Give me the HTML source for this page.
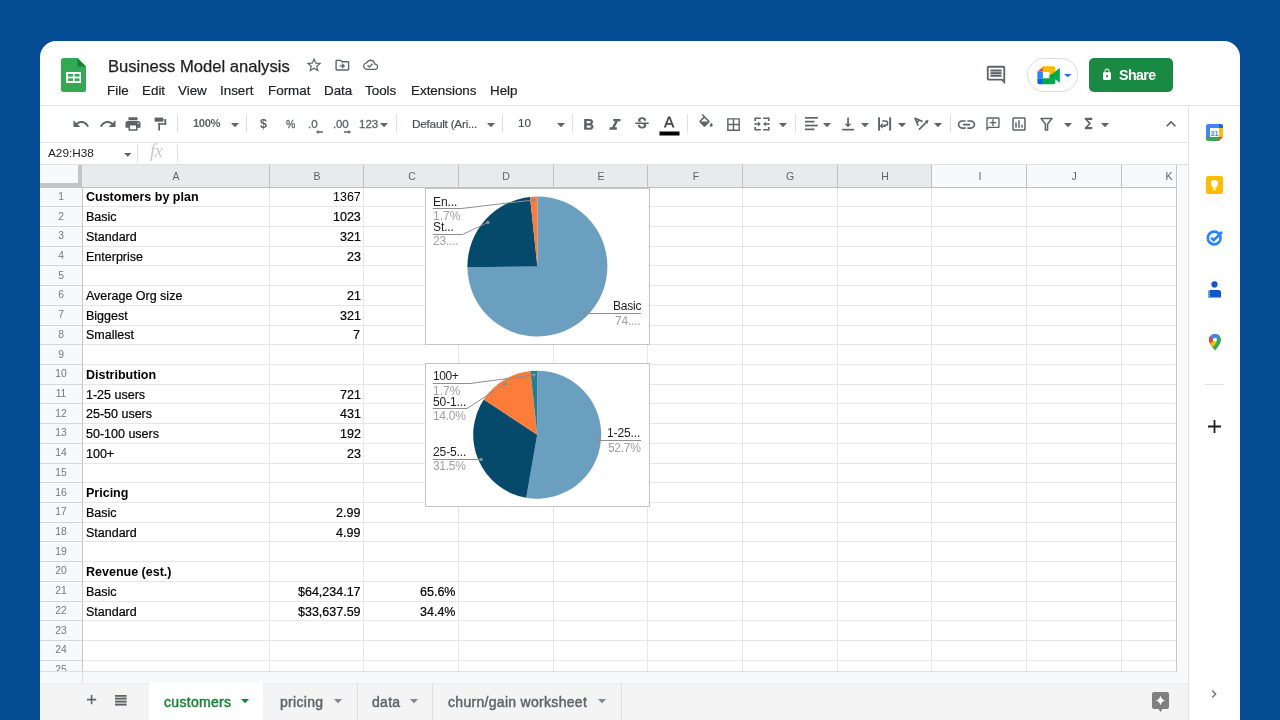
<!DOCTYPE html><html><head><meta charset="utf-8"><style>
*{box-sizing:border-box}
html,body{margin:0;padding:0}
body{-webkit-font-smoothing:antialiased;width:1280px;height:720px;overflow:hidden;position:relative;background:#044c94;font-family:"Liberation Sans", sans-serif;}
.a{position:absolute}
.t{position:absolute;white-space:nowrap;line-height:1;will-change:transform}
svg{position:absolute;overflow:visible}
</style></head><body>
<div class="a" style="left:40px;top:41px;width:1200px;height:700px;background:#fff;border-radius:16px 16px 0 0"></div>

<svg style="left:61.4px;top:58.4px" width="25" height="34" viewBox="0 0 25 34"><path d="M0 2.5 Q0 0 2.5 0 H16.5 L25 8.5 V31.5 Q25 34 22.5 34 H2.5 Q0 34 0 31.5 Z" fill="#34a853"/>
<path d="M16.5 0 L25 8.5 H16.5 Z" fill="#188038"/>
<rect x="5" y="14" width="15" height="11" fill="#fff"/>
<rect x="7" y="16" width="5" height="2.6" fill="#34a853"/><rect x="13.5" y="16" width="5" height="2.6" fill="#34a853"/>
<rect x="7" y="20.4" width="5" height="2.6" fill="#34a853"/><rect x="13.5" y="20.4" width="5" height="2.6" fill="#34a853"/></svg>
<div class="t" style="left:107.5px;top:58.55px;font-size:16.6px;color:#1f1f1f;font-weight:400;-webkit-text-stroke:0.25px #1f1f1f">Business Model analysis</div>
<svg style="left:305px;top:56px" width="18" height="18" viewBox="0 0 24 24" preserveAspectRatio="none"><path d="M22 9.24l-7.19-.62L12 2 9.19 8.63 2 9.24l5.46 4.73L5.82 21 12 17.27 18.18 21l-1.63-7.03L22 9.24zM12 15.4l-3.76 2.27 1-4.28-3.32-2.88 4.38-.38L12 6.1l1.71 4.04 4.38.38-3.32 2.88 1 4.28L12 15.4z" fill="#5f6368" /></svg>
<svg style="left:334.3px;top:56.6px" width="16.7" height="16.4" viewBox="0 0 24 24" preserveAspectRatio="none"><path d="M20 6h-8l-2-2H4c-1.1 0-1.99.9-1.99 2L2 18c0 1.1.9 2 2 2h16c1.1 0 2-.9 2-2V8c0-1.1-.9-2-2-2zm0 12H4V6h5.17l2 2H20v10zm-7.84-6H8v2h4.16l-1.59 1.59L11.99 17 16 13.01 11.99 9l-1.41 1.41L12.16 12z" fill="#5f6368" /></svg>
<svg style="left:363.3px;top:57.2px" width="15.2" height="15.6" viewBox="0 0 24 24" preserveAspectRatio="none"><path d="M19.35 10.04C18.67 6.59 15.64 4 12 4 9.11 4 6.6 5.64 5.35 8.04 2.34 8.36 0 10.91 0 14c0 3.31 2.69 6 6 6h13c2.76 0 5-2.24 5-5 0-2.64-2.05-4.78-4.65-4.96zM19 18H6c-2.21 0-4-1.79-4-4 0-2.05 1.530-3.76 3.56-3.97l1.07-.11.5-.95C8.08 7.14 9.94 6 12 6c2.62 0 4.88 1.86 5.39 4.43l.3 1.5 1.530.11c1.56.1 2.78 1.41 2.78 2.96 0 1.65-1.35 3-3 3zm-9-3.82l-2.09-2.09L6.5 13.5 10 17l6.01-6.01-1.41-1.41z" fill="#5f6368" /></svg>
<div class="t" style="left:107px;top:83.96px;font-size:13.4px;color:#202124;font-weight:400;-webkit-text-stroke:0.2px #202124">File</div>
<div class="t" style="left:141.5px;top:83.96px;font-size:13.4px;color:#202124;font-weight:400;-webkit-text-stroke:0.2px #202124">Edit</div>
<div class="t" style="left:177.5px;top:83.96px;font-size:13.4px;color:#202124;font-weight:400;-webkit-text-stroke:0.2px #202124">View</div>
<div class="t" style="left:220px;top:83.96px;font-size:13.4px;color:#202124;font-weight:400;-webkit-text-stroke:0.2px #202124">Insert</div>
<div class="t" style="left:267.5px;top:83.96px;font-size:13.4px;color:#202124;font-weight:400;-webkit-text-stroke:0.2px #202124">Format</div>
<div class="t" style="left:324px;top:83.96px;font-size:13.4px;color:#202124;font-weight:400;-webkit-text-stroke:0.2px #202124">Data</div>
<div class="t" style="left:365px;top:83.96px;font-size:13.4px;color:#202124;font-weight:400;-webkit-text-stroke:0.2px #202124">Tools</div>
<div class="t" style="left:411px;top:83.96px;font-size:13.4px;color:#202124;font-weight:400;-webkit-text-stroke:0.2px #202124">Extensions</div>
<div class="t" style="left:490px;top:83.96px;font-size:13.4px;color:#202124;font-weight:400;-webkit-text-stroke:0.2px #202124">Help</div>
<svg style="left:985px;top:64px" width="22" height="22" viewBox="0 0 24 24"><rect x="6" y="6.5" width="12" height="7" fill="#c0c0c0"/><path d="M21.99 4c0-1.1-.89-2-1.990-2H4c-1.1 0-2 .9-2 2v12c0 1.1.9 2 2 2h14l4 4-.01-18zM20 4v13.170L18.83 16H4V4h16zM6 12h12v2H6zm0-3h12v2H6zm0-3h12v2H6z" fill="#5f6368"/></svg>
<div class="a" style="left:1027px;top:58px;width:51px;height:34px;background:#fff;border:1px solid #dadce0;border-radius:17px"></div>
<svg style="left:1037px;top:66px" width="24" height="19" viewBox="0 0 24 19"><path d="M0.7 5.3 L5.9 0.9 V5.3 Z" fill="#ea4335"/>
<path d="M5.9 0.3 H16.4 Q18.4 0.3 18.4 2.3 V6.6 L12.4 9.6 V6.1 H5.9 Z" fill="#ffba00"/>
<path d="M0.4 5.3 H5.9 V12.5 H0.4 Z" fill="#2684fc"/>
<path d="M0.4 12.5 H5.9 V18.2 H2.4 Q0.4 18.2 0.4 16.2 Z" fill="#0066da"/>
<path d="M5.9 12.2 H12.4 V9.6 L18.4 6.6 V16.2 Q18.4 18.2 16.4 18.2 H5.9 Z" fill="#00ac47"/>
<path d="M12.4 9.6 L18.4 6.6 V13 Z" fill="#00832d"/>
<path d="M13.2 9.5 L22.8 1.9 V16.8 Z" fill="#00ac47"/></svg>
<svg style="left:1064px;top:73.5px" width="8" height="4" viewBox="0 0 8 4"><path d="M0 0 H7.5 L3.75 3.2 Z" fill="#1a73e8"/></svg>
<div class="a" style="left:1089px;top:58px;width:84px;height:34px;background:#1a8944;border-radius:5px"></div>
<svg style="left:1101px;top:68px" width="12" height="13" viewBox="0 0 24 24" preserveAspectRatio="none"><path d="M18 8h-1V6c0-2.76-2.24-5-5-5S7 3.24 7 6v2H6c-1.1 0-2 .9-2 2v10c0 1.1.9 2 2 2h12c1.1 0 2-.9 2-2V10c0-1.1-.9-2-2-2zm-6 9c-1.1 0-2-.9-2-2s.9-2 2-2 2 .9 2 2-.9 2-2 2zm3.1-9H8.9V6c0-1.71 1.39-3.1 3.1-3.1 1.71 0 3.1 1.39 3.1 3.1v2z" fill="#fff" /></svg>
<div class="t" style="left:1119.3px;top:67.98px;font-size:14.2px;color:#fff;font-weight:700;letter-spacing:-0.55px">Share</div>
<div class="a" style="left:40px;top:105px;width:1200px;height:1px;background:#e3e3e3;"></div>
<div class="a" style="left:40px;top:142px;width:1148px;height:1px;background:#e3e3e3;"></div>
<div class="a" style="left:40px;top:164px;width:1148px;height:1px;background:#e0e0e0;"></div>
<div class="a" style="left:1188px;top:106px;width:1px;height:614px;background:#e3e3e3;"></div>
<svg style="left:72px;top:115px" width="18" height="18" viewBox="0 0 24 24" preserveAspectRatio="none"><path d="M12.5 8c-2.65 0-5.05.99-6.9 2.6L2 7v9h9l-3.62-3.62c1.39-1.16 3.16-1.88 5.12-1.88 3.54 0 6.55 2.31 7.600 5.5l2.37-.78C21.08 11.03 17.15 8 12.5 8z" fill="#5f6368" /></svg>
<svg style="left:98.5px;top:115px" width="18" height="18" viewBox="0 0 24 24" preserveAspectRatio="none"><path d="M18.4 10.6C16.55 8.99 14.15 8 11.5 8c-4.65 0-8.58 3.030-9.96 7.22L3.9 16c1.05-3.19 4.05-5.5 7.6-5.5 1.95 0 3.73.72 5.12 1.88L13 16h9V7l-3.6 3.6z" fill="#5f6368" /></svg>
<svg style="left:124.4px;top:115px" width="18" height="18" viewBox="0 0 24 24" preserveAspectRatio="none"><path d="M19 8H5c-1.66 0-3 1.34-3 3v6h4v4h12v-4h4v-6c0-1.66-1.34-3-3-3zm-3 11H8v-5h8v5zm3-7c-.55 0-1-.45-1-1s.45-1 1-1 1 .45 1 1-.45 1-1 1zm-1-9H6v4h12V3z" fill="#5f6368" /></svg>
<svg style="left:150px;top:112px" width="20" height="22" viewBox="0 0 20 22"><g fill="#5f6368"><rect x="4.6" y="5.6" width="8.4" height="4.1"/><rect x="14.4" y="7.4" width="1.8" height="5.3"/><rect x="8.3" y="11.1" width="7.9" height="1.6"/><rect x="8.3" y="11.1" width="1.7" height="7.4"/><rect x="13" y="7.4" width="3.2" height="1"/></g></svg>
<div class="a" style="left:177px;top:114px;width:1px;height:19px;background:#e0e0e0;"></div>
<div class="t" style="left:192.8px;top:118.02px;font-size:11.2px;color:#5f6368;font-weight:700;letter-spacing:-0.4px">100%</div>
<svg style="left:231.2px;top:122.5px" width="8" height="5" viewBox="0 0 8 5"><path d="M0 0 H8 L4 4.2 Z" fill="#5f6368"/></svg>
<div class="a" style="left:246px;top:114px;width:1px;height:19px;background:#e0e0e0;"></div>
<div class="t" style="left:260.3px;top:117.82px;font-size:12.5px;color:#5f6368;font-weight:700;">$</div>
<div class="t" style="left:286px;top:119.11px;font-size:10.5px;color:#5f6368;font-weight:400;-webkit-text-stroke:0.3px #5f6368">%</div>
<div class="t" style="left:308.3px;top:118.77px;font-size:11.5px;color:#5f6368;font-weight:400;-webkit-text-stroke:0.3px #5f6368">.0</div>
<svg style="left:316px;top:129.5px" width="7" height="4" viewBox="0 0 7 4"><path d="M0 2 L2.5 0 V1.3 H7 V2.7 H2.5 V4 Z" fill="#5f6368"/></svg>
<div class="t" style="left:333.3px;top:118.77px;font-size:11.5px;color:#5f6368;font-weight:400;letter-spacing:-0.2px;-webkit-text-stroke:0.3px #5f6368">.00</div>
<svg style="left:344.3px;top:129.5px" width="7" height="4" viewBox="0 0 7 4"><path d="M7 2 L4.5 0 V1.3 H0 V2.7 H4.5 V4 Z" fill="#5f6368"/></svg>
<div class="t" style="left:358.8px;top:118.77px;font-size:11.5px;color:#5f6368;font-weight:400;-webkit-text-stroke:0.3px #5f6368">123</div>
<svg style="left:379.7px;top:122.5px" width="8" height="5" viewBox="0 0 8 5"><path d="M0 0 H8 L4 4.2 Z" fill="#5f6368"/></svg>
<div class="a" style="left:396px;top:114px;width:1px;height:19px;background:#e0e0e0;"></div>
<div class="t" style="left:411.7px;top:118.51px;font-size:11.8px;color:#4d5156;font-weight:400;letter-spacing:-0.25px;-webkit-text-stroke:0.2px #4d5156">Default (Ari...</div>
<svg style="left:486.7px;top:122.5px" width="8" height="5" viewBox="0 0 8 5"><path d="M0 0 H8 L4 4.2 Z" fill="#5f6368"/></svg>
<div class="a" style="left:502px;top:114px;width:1px;height:19px;background:#e0e0e0;"></div>
<div class="t" style="left:518px;top:118.21px;font-size:11.8px;color:#4d5156;font-weight:400;-webkit-text-stroke:0.2px #4d5156">10</div>
<svg style="left:557.0px;top:122.5px" width="8" height="5" viewBox="0 0 8 5"><path d="M0 0 H8 L4 4.2 Z" fill="#5f6368"/></svg>
<div class="a" style="left:572px;top:114px;width:1px;height:19px;background:#e0e0e0;"></div>
<svg style="left:577.9px;top:115.8px" width="21" height="18.2" viewBox="0 0 24 24" preserveAspectRatio="none"><path d="M15.6 10.79c.97-.67 1.65-1.77 1.65-2.79 0-2.26-1.75-4-4-4H7v14h7.04c2.09 0 3.71-1.7 3.71-3.79 0-1.52-.86-2.82-2.15-3.42zM10 6.5h3c.83 0 1.5.67 1.5 1.5s-.67 1.5-1.5 1.5h-3v-3zm3.5 9H10v-3h3.5c.83 0 1.5.67 1.5 1.5s-.67 1.5-1.5 1.5z" fill="#5f6368" /></svg>
<svg style="left:604.3px;top:115.8px" width="22" height="18.2" viewBox="0 0 24 24" preserveAspectRatio="none"><path d="M10 4v3h2.21l-3.42 8H6v3h8v-3h-2.21l3.42-8H18V4z" fill="#5f6368" /></svg>
<svg style="left:633px;top:115px" width="18" height="18" viewBox="0 0 24 24" preserveAspectRatio="none"><path d="M7.24 8.75c-.26-.48-.39-1.03-.39-1.67 0-.61.13-1.16.4-1.67.26-.5.63-.93 1.11-1.29.48-.35 1.05-.63 1.7-.83.66-.19 1.39-.29 2.18-.29.81 0 1.54.11 2.21.34.66.22 1.23.54 1.69.94.47.4.83.88 1.08 1.43.25.55.38 1.15.38 1.81h-3.01c0-.31-.05-.59-.15-.85-.09-.27-.24-.49-.44-.68-.2-.19-.45-.33-.75-.44-.3-.1-.66-.16-1.06-.16-.39 0-.74.04-1.03.13-.29.09-.53.21-.72.36-.19.16-.34.34-.44.55-.1.21-.15.43-.15.66 0 .48.25.88.74 1.21.38.25.77.48 1.41.7H7.39c-.05-.08-.11-.17-.15-.25zM21 12v-2H3v2h9.62c.18.07.4.14.55.2.37.17.66.34.87.51.21.17.35.36.43.57.07.2.11.43.11.69 0 .23-.05.45-.14.66-.09.2-.23.38-.42.53-.19.15-.42.26-.71.35-.29.08-.63.13-1.01.13-.43 0-.83-.04-1.18-.13s-.66-.23-.91-.42c-.25-.19-.45-.44-.59-.75-.14-.31-.25-.76-.25-1.21H6.4c0 .55.08 1.13.24 1.58.16.45.37.85.65 1.21.28.35.6.66.98.92.37.26.78.48 1.22.65.44.17.9.3 1.38.39.48.08.96.13 1.44.13.8 0 1.53-.09 2.18-.28s1.21-.45 1.67-.79c.46-.34.82-.77 1.07-1.27s.38-1.07.38-1.71c0-.6-.1-1.14-.31-1.61-.05-.11-.11-.23-.17-.33H21z" fill="#5f6368" /></svg>
<svg style="left:659px;top:116px" width="21" height="20" viewBox="0 0 21 20"><path d="M4.8 11.5 L9.1 0.6 H11.2 L15.5 11.5 H13.4 L12.4 8.8 H7.9 L6.9 11.5 Z M8.5 7.1 H11.8 L10.15 2.6 Z" fill="#444746"/><rect x="0.5" y="15.5" width="20" height="4" fill="#000"/></svg>
<div class="a" style="left:687px;top:114px;width:1px;height:19px;background:#e0e0e0;"></div>
<svg style="left:697px;top:114px" width="18" height="18" viewBox="0 0 24 24" preserveAspectRatio="none"><path d="M16.56 8.94L7.62 0 6.21 1.41l2.38 2.38-5.15 5.15c-.59.59-.59 1.54 0 2.12l5.5 5.5c.29.29.68.44 1.06.44s.77-.15 1.06-.44l5.5-5.5c.59-.58.59-1.53 0-2.12zM5.21 10L10 5.21 14.79 10H5.21zM19 11.5s-2 2.17-2 3.5c0 1.1.9 2 2 2s2-.9 2-2c0-1.33-2-3.5-2-3.5z" fill="#5f6368" /></svg>
<svg style="left:725px;top:115.5px" width="17" height="17" viewBox="0 0 24 24" preserveAspectRatio="none"><path d="M3 3v18h18V3H3zm8 16H5v-6h6v6zm0-8H5V5h6v6zm8 8h-6v-6h6v6zm0-8h-6V5h6v6z" fill="#5f6368" /></svg>
<svg style="left:750px;top:112px" width="24" height="24" viewBox="0 0 24 24"><g fill="none" stroke="#5f6368" stroke-width="1.6"><path d="M5.2 9 V6.2 H10.8"/><path d="M5.2 15 V17.8 H10.8"/><path d="M18.8 9 V6.2 H13.2"/><path d="M18.8 15 V17.8 H13.2"/><path d="M4.4 12 H9"/><path d="M19.6 12 H15"/></g><path d="M8.2 9.6 L10.8 12 L8.2 14.4Z M15.8 9.6 L13.2 12 L15.8 14.4Z" fill="#5f6368"/></svg>
<svg style="left:779.0px;top:122.5px" width="8" height="5" viewBox="0 0 8 5"><path d="M0 0 H8 L4 4.2 Z" fill="#5f6368"/></svg>
<div class="a" style="left:795px;top:114px;width:1px;height:19px;background:#e0e0e0;"></div>
<svg style="left:805px;top:117.4px" width="13" height="13" viewBox="0 0 13 13"><g fill="#5f6368"><rect x="0" y="0" width="12.8" height="1.7"/><rect x="0" y="3.8" width="9.4" height="1.7"/><rect x="0" y="7.7" width="12.8" height="1.7"/><rect x="0" y="11.5" width="9.4" height="1.7"/></g></svg>
<svg style="left:823.4px;top:122.5px" width="8" height="5" viewBox="0 0 8 5"><path d="M0 0 H8 L4 4.2 Z" fill="#5f6368"/></svg>
<svg style="left:842px;top:117px" width="13" height="14" viewBox="0 0 13 14"><g fill="#5f6368"><rect x="5.2" y="0.6" width="1.7" height="7.5"/><path d="M2.6 6.8 H9.4 L6 10.3 Z"/><rect x="0.2" y="11.8" width="11.8" height="1.7"/></g></svg>
<svg style="left:860.6px;top:122.5px" width="8" height="5" viewBox="0 0 8 5"><path d="M0 0 H8 L4 4.2 Z" fill="#5f6368"/></svg>
<svg style="left:877px;top:116px" width="16" height="16" viewBox="0 0 16 16"><g fill="#5f6368"><rect x="1.1" y="1.3" width="1.9" height="13.3"/><rect x="12.2" y="1.3" width="1.9" height="13.3"/><path d="M8.5 9.4 L5 9.4 L6.3 8 L5.3 7.2 L2.6 10 L5.3 12.6 L6.3 11.7 L5 10.9 H8.5Z"/></g><path d="M5.2 5 H8.6 Q10.6 5 10.6 7.2 Q10.6 9.3 8.6 9.3 H6.5" fill="none" stroke="#5f6368" stroke-width="1.6"/></svg>
<svg style="left:897.7px;top:122.5px" width="8" height="5" viewBox="0 0 8 5"><path d="M0 0 H8 L4 4.2 Z" fill="#5f6368"/></svg>
<svg style="left:912px;top:116px" width="18" height="16" viewBox="0 0 18 16"><g fill="none" stroke="#5f6368" stroke-width="1.6" stroke-linejoin="round"><path d="M6.2 9.8 L3 2.2 L10.6 5.6"/><path d="M4.6 6.6 L7.2 4.2"/><path d="M7 13.6 L15.2 5.4"/></g><path d="M16.6 3.8 L12.6 4.9 L15.5 7.8 Z" fill="#5f6368"/></svg>
<svg style="left:933.6px;top:122.5px" width="8" height="5" viewBox="0 0 8 5"><path d="M0 0 H8 L4 4.2 Z" fill="#5f6368"/></svg>
<div class="a" style="left:950px;top:114px;width:1px;height:19px;background:#e0e0e0;"></div>
<svg style="left:956px;top:114px" width="21" height="21" viewBox="0 0 24 24" preserveAspectRatio="none"><path d="M3.9 12c0-1.71 1.39-3.1 3.1-3.1h4V7H7c-2.76 0-5 2.24-5 5s2.24 5 5 5h4v-1.9H7c-1.71 0-3.1-1.390-3.1-3.1zM8 13h8v-2H8v2zm9-6h-4v1.9h4c1.71 0 3.1 1.39 3.1 3.1s-1.39 3.1-3.1 3.1h-4V17h4c2.76 0 5-2.24 5-5s-2.24-5-5-5z" fill="#5f6368" /></svg>
<svg style="left:985px;top:116px" width="16" height="16" viewBox="0 0 24 24" preserveAspectRatio="none"><path d="M20 2H4c-1.1 0-2 .9-2 2v18l4-4h14c1.1 0 2-.9 2-2V4c0-1.1-.9-2-2-2zm0 14H5.17L4 17.17V4h16v12zM13 5h-2v4H7v2h4v4h2v-4h4V9h-4z" fill="#5f6368" /></svg>
<svg style="left:1010px;top:115px" width="18" height="18" viewBox="0 0 24 24" preserveAspectRatio="none"><path d="M19 3H5c-1.1 0-2 .9-2 2v14c0 1.1.9 2 2 2h14c1.1 0 2-.9 2-2V5c0-1.1-.9-2-2-2zm0 16H5V5h14v14zM7 10h2v7H7zm4-3h2v10h-2zm4 6h2v4h-2z" fill="#5f6368" /></svg>
<svg style="left:1040px;top:117px" width="13" height="14" viewBox="0 0 13 14"><path d="M1 1.5 H12 L7.6 7 V13 H5.4 V7 Z" fill="none" stroke="#5f6368" stroke-width="1.5" stroke-linejoin="round"/></svg>
<svg style="left:1064.0px;top:122.5px" width="8" height="5" viewBox="0 0 8 5"><path d="M0 0 H8 L4 4.2 Z" fill="#5f6368"/></svg>
<svg style="left:1081px;top:115px" width="15" height="17" viewBox="0 0 24 24" preserveAspectRatio="none"><path d="M18 4H6v2l6.5 6L6 18v2h12v-3h-7l5-5-5-5h7z" fill="#5f6368" /></svg>
<svg style="left:1100.5px;top:122.5px" width="8" height="5" viewBox="0 0 8 5"><path d="M0 0 H8 L4 4.2 Z" fill="#5f6368"/></svg>
<svg style="left:1161px;top:114px" width="20" height="20" viewBox="0 0 24 24" preserveAspectRatio="none"><path d="M12 8l-6 6 1.41 1.41L12 10.83l4.59 4.58L18 14z" fill="#5f6368" /></svg>
<div class="t" style="left:47.5px;top:147.51px;font-size:11.8px;color:#1f1f1f;font-weight:400;">A29:H38</div>
<svg style="left:123.5px;top:152.8px" width="8" height="5" viewBox="0 0 8 5"><path d="M0 0 H7.5 L3.75 3.8 Z" fill="#5f6368"/></svg>
<div class="a" style="left:137px;top:144px;width:1px;height:19px;background:#e0e0e0;"></div>
<div class="t" style="left:149.5px;top:142.14px;font-size:18.5px;color:#cacaca;font-weight:400;font-family:'Liberation Serif',serif;font-style:italic;letter-spacing:-0.5px">fx</div>
<div class="a" style="left:177px;top:145px;width:1px;height:17px;background:#e0e0e0;"></div>
<div class="a" style="left:40px;top:165px;width:1148px;height:22px;background:#ffffff;"></div>
<div class="a" style="left:40px;top:165px;width:42px;height:22px;background:#f8f9fa;"></div>
<div class="a" style="left:82px;top:165px;width:850px;height:22px;background:#e8eaed;"></div>
<div class="a" style="left:932px;top:165px;width:245px;height:22px;background:#f8f9fa;"></div>
<div class="a" style="left:40px;top:187px;width:42px;height:485px;background:#f8f9fa;"></div>
<div class="t" style="left:76.25px;width:200px;text-align:center;top:171.31px;font-size:10.5px;color:#5f6368;font-weight:400;">A</div>
<div class="t" style="left:216.85000000000002px;width:200px;text-align:center;top:171.31px;font-size:10.5px;color:#5f6368;font-weight:400;">B</div>
<div class="t" style="left:311.54999999999995px;width:200px;text-align:center;top:171.31px;font-size:10.5px;color:#5f6368;font-weight:400;">C</div>
<div class="t" style="left:406.25px;width:200px;text-align:center;top:171.31px;font-size:10.5px;color:#5f6368;font-weight:400;">D</div>
<div class="t" style="left:500.95000000000005px;width:200px;text-align:center;top:171.31px;font-size:10.5px;color:#5f6368;font-weight:400;">E</div>
<div class="t" style="left:595.65px;width:200px;text-align:center;top:171.31px;font-size:10.5px;color:#5f6368;font-weight:400;">F</div>
<div class="t" style="left:690.35px;width:200px;text-align:center;top:171.31px;font-size:10.5px;color:#5f6368;font-weight:400;">G</div>
<div class="t" style="left:785.05px;width:200px;text-align:center;top:171.31px;font-size:10.5px;color:#5f6368;font-weight:400;">H</div>
<div class="t" style="left:879.75px;width:200px;text-align:center;top:171.31px;font-size:10.5px;color:#5f6368;font-weight:400;">I</div>
<div class="t" style="left:974.45px;width:200px;text-align:center;top:171.31px;font-size:10.5px;color:#5f6368;font-weight:400;">J</div>
<div class="t" style="left:1069.15px;width:200px;text-align:center;top:171.31px;font-size:10.5px;color:#5f6368;font-weight:400;">K</div>
<div class="a" style="left:40px;top:206px;width:42px;height:1px;background:#d6d6d6;"></div>
<div class="a" style="left:82px;top:206px;width:1095px;height:1px;background:#e6e6e6;"></div>
<div class="a" style="left:40px;top:226px;width:42px;height:1px;background:#d6d6d6;"></div>
<div class="a" style="left:82px;top:226px;width:1095px;height:1px;background:#e6e6e6;"></div>
<div class="a" style="left:40px;top:246px;width:42px;height:1px;background:#d6d6d6;"></div>
<div class="a" style="left:82px;top:246px;width:1095px;height:1px;background:#e6e6e6;"></div>
<div class="a" style="left:40px;top:265px;width:42px;height:1px;background:#d6d6d6;"></div>
<div class="a" style="left:82px;top:265px;width:1095px;height:1px;background:#e6e6e6;"></div>
<div class="a" style="left:40px;top:285px;width:42px;height:1px;background:#d6d6d6;"></div>
<div class="a" style="left:82px;top:285px;width:1095px;height:1px;background:#e6e6e6;"></div>
<div class="a" style="left:40px;top:305px;width:42px;height:1px;background:#d6d6d6;"></div>
<div class="a" style="left:82px;top:305px;width:1095px;height:1px;background:#e6e6e6;"></div>
<div class="a" style="left:40px;top:325px;width:42px;height:1px;background:#d6d6d6;"></div>
<div class="a" style="left:82px;top:325px;width:1095px;height:1px;background:#e6e6e6;"></div>
<div class="a" style="left:40px;top:344px;width:42px;height:1px;background:#d6d6d6;"></div>
<div class="a" style="left:82px;top:344px;width:1095px;height:1px;background:#e6e6e6;"></div>
<div class="a" style="left:40px;top:364px;width:42px;height:1px;background:#d6d6d6;"></div>
<div class="a" style="left:82px;top:364px;width:1095px;height:1px;background:#e6e6e6;"></div>
<div class="a" style="left:40px;top:384px;width:42px;height:1px;background:#d6d6d6;"></div>
<div class="a" style="left:82px;top:384px;width:1095px;height:1px;background:#e6e6e6;"></div>
<div class="a" style="left:40px;top:403px;width:42px;height:1px;background:#d6d6d6;"></div>
<div class="a" style="left:82px;top:403px;width:1095px;height:1px;background:#e6e6e6;"></div>
<div class="a" style="left:40px;top:423px;width:42px;height:1px;background:#d6d6d6;"></div>
<div class="a" style="left:82px;top:423px;width:1095px;height:1px;background:#e6e6e6;"></div>
<div class="a" style="left:40px;top:443px;width:42px;height:1px;background:#d6d6d6;"></div>
<div class="a" style="left:82px;top:443px;width:1095px;height:1px;background:#e6e6e6;"></div>
<div class="a" style="left:40px;top:463px;width:42px;height:1px;background:#d6d6d6;"></div>
<div class="a" style="left:82px;top:463px;width:1095px;height:1px;background:#e6e6e6;"></div>
<div class="a" style="left:40px;top:482px;width:42px;height:1px;background:#d6d6d6;"></div>
<div class="a" style="left:82px;top:482px;width:1095px;height:1px;background:#e6e6e6;"></div>
<div class="a" style="left:40px;top:502px;width:42px;height:1px;background:#d6d6d6;"></div>
<div class="a" style="left:82px;top:502px;width:1095px;height:1px;background:#e6e6e6;"></div>
<div class="a" style="left:40px;top:522px;width:42px;height:1px;background:#d6d6d6;"></div>
<div class="a" style="left:82px;top:522px;width:1095px;height:1px;background:#e6e6e6;"></div>
<div class="a" style="left:40px;top:541px;width:42px;height:1px;background:#d6d6d6;"></div>
<div class="a" style="left:82px;top:541px;width:1095px;height:1px;background:#e6e6e6;"></div>
<div class="a" style="left:40px;top:561px;width:42px;height:1px;background:#d6d6d6;"></div>
<div class="a" style="left:82px;top:561px;width:1095px;height:1px;background:#e6e6e6;"></div>
<div class="a" style="left:40px;top:581px;width:42px;height:1px;background:#d6d6d6;"></div>
<div class="a" style="left:82px;top:581px;width:1095px;height:1px;background:#e6e6e6;"></div>
<div class="a" style="left:40px;top:601px;width:42px;height:1px;background:#d6d6d6;"></div>
<div class="a" style="left:82px;top:601px;width:1095px;height:1px;background:#e6e6e6;"></div>
<div class="a" style="left:40px;top:620px;width:42px;height:1px;background:#d6d6d6;"></div>
<div class="a" style="left:82px;top:620px;width:1095px;height:1px;background:#e6e6e6;"></div>
<div class="a" style="left:40px;top:640px;width:42px;height:1px;background:#d6d6d6;"></div>
<div class="a" style="left:82px;top:640px;width:1095px;height:1px;background:#e6e6e6;"></div>
<div class="a" style="left:40px;top:660px;width:42px;height:1px;background:#d6d6d6;"></div>
<div class="a" style="left:82px;top:660px;width:1095px;height:1px;background:#e6e6e6;"></div>
<div class="a" style="left:269px;top:187px;width:1px;height:485px;background:#e6e6e6;"></div>
<div class="a" style="left:269px;top:165px;width:1px;height:22px;background:#c0c0c0;"></div>
<div class="a" style="left:363px;top:187px;width:1px;height:485px;background:#e6e6e6;"></div>
<div class="a" style="left:363px;top:165px;width:1px;height:22px;background:#c0c0c0;"></div>
<div class="a" style="left:458px;top:187px;width:1px;height:485px;background:#e6e6e6;"></div>
<div class="a" style="left:458px;top:165px;width:1px;height:22px;background:#c0c0c0;"></div>
<div class="a" style="left:553px;top:187px;width:1px;height:485px;background:#e6e6e6;"></div>
<div class="a" style="left:553px;top:165px;width:1px;height:22px;background:#c0c0c0;"></div>
<div class="a" style="left:647px;top:187px;width:1px;height:485px;background:#e6e6e6;"></div>
<div class="a" style="left:647px;top:165px;width:1px;height:22px;background:#c0c0c0;"></div>
<div class="a" style="left:742px;top:187px;width:1px;height:485px;background:#e6e6e6;"></div>
<div class="a" style="left:742px;top:165px;width:1px;height:22px;background:#c0c0c0;"></div>
<div class="a" style="left:837px;top:187px;width:1px;height:485px;background:#e6e6e6;"></div>
<div class="a" style="left:837px;top:165px;width:1px;height:22px;background:#c0c0c0;"></div>
<div class="a" style="left:931px;top:187px;width:1px;height:485px;background:#e6e6e6;"></div>
<div class="a" style="left:931px;top:165px;width:1px;height:22px;background:#c0c0c0;"></div>
<div class="a" style="left:1026px;top:187px;width:1px;height:485px;background:#e6e6e6;"></div>
<div class="a" style="left:1026px;top:165px;width:1px;height:22px;background:#c0c0c0;"></div>
<div class="a" style="left:1121px;top:187px;width:1px;height:485px;background:#e6e6e6;"></div>
<div class="a" style="left:1121px;top:165px;width:1px;height:22px;background:#c0c0c0;"></div>
<div class="a" style="left:1176px;top:165px;width:1px;height:518px;background:#c7c7c7;"></div>
<div class="a" style="left:40px;top:187px;width:1137px;height:1px;background:#c0c0c0;"></div>
<div class="a" style="left:78px;top:165px;width:4px;height:22px;background:#c4c4c4;"></div>
<div class="a" style="left:82px;top:187px;width:1px;height:485px;background:#c7c7c7;"></div>
<div class="a" style="left:40px;top:183px;width:42px;height:4px;background:#c4c4c4;"></div>
<div class="t" style="left:-39px;width:200px;text-align:center;top:191.82px;font-size:10.3px;color:#777777;font-weight:400;">1</div>
<div class="t" style="left:-39px;width:200px;text-align:center;top:211.54px;font-size:10.3px;color:#777777;font-weight:400;">2</div>
<div class="t" style="left:-39px;width:200px;text-align:center;top:231.25px;font-size:10.3px;color:#777777;font-weight:400;">3</div>
<div class="t" style="left:-39px;width:200px;text-align:center;top:250.97px;font-size:10.3px;color:#777777;font-weight:400;">4</div>
<div class="t" style="left:-39px;width:200px;text-align:center;top:270.69px;font-size:10.3px;color:#777777;font-weight:400;">5</div>
<div class="t" style="left:-39px;width:200px;text-align:center;top:290.40px;font-size:10.3px;color:#777777;font-weight:400;">6</div>
<div class="t" style="left:-39px;width:200px;text-align:center;top:310.12px;font-size:10.3px;color:#777777;font-weight:400;">7</div>
<div class="t" style="left:-39px;width:200px;text-align:center;top:329.84px;font-size:10.3px;color:#777777;font-weight:400;">8</div>
<div class="t" style="left:-39px;width:200px;text-align:center;top:349.56px;font-size:10.3px;color:#777777;font-weight:400;">9</div>
<div class="t" style="left:-39px;width:200px;text-align:center;top:369.27px;font-size:10.3px;color:#777777;font-weight:400;">10</div>
<div class="t" style="left:-39px;width:200px;text-align:center;top:388.99px;font-size:10.3px;color:#777777;font-weight:400;">11</div>
<div class="t" style="left:-39px;width:200px;text-align:center;top:408.71px;font-size:10.3px;color:#777777;font-weight:400;">12</div>
<div class="t" style="left:-39px;width:200px;text-align:center;top:428.42px;font-size:10.3px;color:#777777;font-weight:400;">13</div>
<div class="t" style="left:-39px;width:200px;text-align:center;top:448.14px;font-size:10.3px;color:#777777;font-weight:400;">14</div>
<div class="t" style="left:-39px;width:200px;text-align:center;top:467.86px;font-size:10.3px;color:#777777;font-weight:400;">15</div>
<div class="t" style="left:-39px;width:200px;text-align:center;top:487.57px;font-size:10.3px;color:#777777;font-weight:400;">16</div>
<div class="t" style="left:-39px;width:200px;text-align:center;top:507.29px;font-size:10.3px;color:#777777;font-weight:400;">17</div>
<div class="t" style="left:-39px;width:200px;text-align:center;top:527.01px;font-size:10.3px;color:#777777;font-weight:400;">18</div>
<div class="t" style="left:-39px;width:200px;text-align:center;top:546.73px;font-size:10.3px;color:#777777;font-weight:400;">19</div>
<div class="t" style="left:-39px;width:200px;text-align:center;top:566.44px;font-size:10.3px;color:#777777;font-weight:400;">20</div>
<div class="t" style="left:-39px;width:200px;text-align:center;top:586.16px;font-size:10.3px;color:#777777;font-weight:400;">21</div>
<div class="t" style="left:-39px;width:200px;text-align:center;top:605.88px;font-size:10.3px;color:#777777;font-weight:400;">22</div>
<div class="t" style="left:-39px;width:200px;text-align:center;top:625.59px;font-size:10.3px;color:#777777;font-weight:400;">23</div>
<div class="t" style="left:-39px;width:200px;text-align:center;top:645.31px;font-size:10.3px;color:#777777;font-weight:400;">24</div>
<div class="t" style="left:-39px;width:200px;text-align:center;top:665.03px;font-size:10.3px;color:#777777;font-weight:400;">25</div>
<div class="a" style="left:40px;top:672px;width:1148px;height:11px;background:#f8f9fa;"></div>
<div class="a" style="left:40px;top:671px;width:1137px;height:1px;background:#e0e0e0;"></div>
<div class="a" style="left:1177px;top:165px;width:11px;height:518px;background:#f8f9fa;"></div>
<div class="a" style="left:82px;top:672px;width:1px;height:11px;background:#e0e0e0;"></div>
<div class="t" style="left:86.3px;top:191.47px;font-size:12.5px;color:#000;font-weight:700;">Customers by plan</div>
<div class="t" style="right:919.6px;top:191.47px;font-size:12.5px;color:#000;font-weight:400;">1367</div>
<div class="t" style="left:86.3px;top:211.19px;font-size:12.5px;color:#000;font-weight:400;-webkit-text-stroke:0.2px #000">Basic</div>
<div class="t" style="right:919.6px;top:211.19px;font-size:12.5px;color:#000;font-weight:400;-webkit-text-stroke:0.2px #000">1023</div>
<div class="t" style="left:86.3px;top:230.90px;font-size:12.5px;color:#000;font-weight:400;-webkit-text-stroke:0.2px #000">Standard</div>
<div class="t" style="right:919.6px;top:230.90px;font-size:12.5px;color:#000;font-weight:400;-webkit-text-stroke:0.2px #000">321</div>
<div class="t" style="left:86.3px;top:250.62px;font-size:12.5px;color:#000;font-weight:400;-webkit-text-stroke:0.2px #000">Enterprise</div>
<div class="t" style="right:919.6px;top:250.62px;font-size:12.5px;color:#000;font-weight:400;-webkit-text-stroke:0.2px #000">23</div>
<div class="t" style="left:86.3px;top:290.05px;font-size:12.5px;color:#000;font-weight:400;-webkit-text-stroke:0.2px #000">Average Org size</div>
<div class="t" style="right:919.6px;top:290.05px;font-size:12.5px;color:#000;font-weight:400;-webkit-text-stroke:0.2px #000">21</div>
<div class="t" style="left:86.3px;top:309.77px;font-size:12.5px;color:#000;font-weight:400;-webkit-text-stroke:0.2px #000">Biggest</div>
<div class="t" style="right:919.6px;top:309.77px;font-size:12.5px;color:#000;font-weight:400;-webkit-text-stroke:0.2px #000">321</div>
<div class="t" style="left:86.3px;top:329.49px;font-size:12.5px;color:#000;font-weight:400;-webkit-text-stroke:0.2px #000">Smallest</div>
<div class="t" style="right:919.6px;top:329.49px;font-size:12.5px;color:#000;font-weight:400;-webkit-text-stroke:0.2px #000">7</div>
<div class="t" style="left:86.3px;top:368.92px;font-size:12.5px;color:#000;font-weight:700;">Distribution</div>
<div class="t" style="left:86.3px;top:388.64px;font-size:12.5px;color:#000;font-weight:400;-webkit-text-stroke:0.2px #000">1-25 users</div>
<div class="t" style="right:919.6px;top:388.64px;font-size:12.5px;color:#000;font-weight:400;-webkit-text-stroke:0.2px #000">721</div>
<div class="t" style="left:86.3px;top:408.36px;font-size:12.5px;color:#000;font-weight:400;-webkit-text-stroke:0.2px #000">25-50 users</div>
<div class="t" style="right:919.6px;top:408.36px;font-size:12.5px;color:#000;font-weight:400;-webkit-text-stroke:0.2px #000">431</div>
<div class="t" style="left:86.3px;top:428.07px;font-size:12.5px;color:#000;font-weight:400;-webkit-text-stroke:0.2px #000">50-100 users</div>
<div class="t" style="right:919.6px;top:428.07px;font-size:12.5px;color:#000;font-weight:400;-webkit-text-stroke:0.2px #000">192</div>
<div class="t" style="left:86.3px;top:447.79px;font-size:12.5px;color:#000;font-weight:400;-webkit-text-stroke:0.2px #000">100+</div>
<div class="t" style="right:919.6px;top:447.79px;font-size:12.5px;color:#000;font-weight:400;-webkit-text-stroke:0.2px #000">23</div>
<div class="t" style="left:86.3px;top:487.22px;font-size:12.5px;color:#000;font-weight:700;">Pricing</div>
<div class="t" style="left:86.3px;top:506.94px;font-size:12.5px;color:#000;font-weight:400;-webkit-text-stroke:0.2px #000">Basic</div>
<div class="t" style="right:919.6px;top:506.94px;font-size:12.5px;color:#000;font-weight:400;-webkit-text-stroke:0.2px #000">2.99</div>
<div class="t" style="left:86.3px;top:526.66px;font-size:12.5px;color:#000;font-weight:400;-webkit-text-stroke:0.2px #000">Standard</div>
<div class="t" style="right:919.6px;top:526.66px;font-size:12.5px;color:#000;font-weight:400;-webkit-text-stroke:0.2px #000">4.99</div>
<div class="t" style="left:86.3px;top:566.09px;font-size:12.5px;color:#000;font-weight:700;">Revenue (est.)</div>
<div class="t" style="left:86.3px;top:585.81px;font-size:12.5px;color:#000;font-weight:400;-webkit-text-stroke:0.2px #000">Basic</div>
<div class="t" style="right:919.6px;top:585.81px;font-size:12.5px;color:#000;font-weight:400;-webkit-text-stroke:0.2px #000">$64,234.17</div>
<div class="t" style="right:824.8px;top:585.81px;font-size:12.5px;color:#000;font-weight:400;-webkit-text-stroke:0.2px #000">65.6%</div>
<div class="t" style="left:86.3px;top:605.53px;font-size:12.5px;color:#000;font-weight:400;-webkit-text-stroke:0.2px #000">Standard</div>
<div class="t" style="right:919.6px;top:605.53px;font-size:12.5px;color:#000;font-weight:400;-webkit-text-stroke:0.2px #000">$33,637.59</div>
<div class="t" style="right:824.8px;top:605.53px;font-size:12.5px;color:#000;font-weight:400;-webkit-text-stroke:0.2px #000">34.4%</div>
<div class="a" style="left:425px;top:188px;width:225px;height:157px;background:#fff;border:1px solid #c4c4c4"></div>
<div class="a" style="left:425px;top:363px;width:225px;height:144px;background:#fff;border:1px solid #c4c4c4"></div>
<svg style="left:0;top:0" width="1280" height="720" viewBox="0 0 1280 720"><path d="M537.4 266.5 L537.40 196.50 A70 70 0 1 1 467.40 267.22 Z" fill="#6a9fc0"/><path d="M537.4 266.5 L467.40 267.22 A70 70 0 0 1 530.01 196.89 Z" fill="#064a6b"/><path d="M537.4 266.5 L530.01 196.89 A70 70 0 0 1 537.40 196.50 Z" fill="#fd7c39"/><polyline points="432.8,208.5 461.3,208.5 533.4,200" fill="none" stroke="#8e8e8e" stroke-width="1"/><circle cx="533.4" cy="200" r="1.8" fill="#8e8e8e"/><polyline points="432.8,234.5 462.5,234.5 487.8,222.5" fill="none" stroke="#8e8e8e" stroke-width="1"/><circle cx="487.8" cy="222.5" r="1.8" fill="#8e8e8e"/><polyline points="584.7,313.5 640.9,313.5" fill="none" stroke="#8e8e8e" stroke-width="1"/><circle cx="584.7" cy="313.5" r="1.8" fill="#8e8e8e"/><path d="M537.2 434.7 L537.20 370.70 A64 64 0 1 1 526.22 497.75 Z" fill="#6a9fc0"/><path d="M537.2 434.7 L526.22 497.75 A64 64 0 0 1 483.76 399.49 Z" fill="#064a6b"/><path d="M537.2 434.7 L483.76 399.49 A64 64 0 0 1 530.45 371.06 Z" fill="#fd7c39"/><path d="M537.2 434.7 L530.45 371.06 A64 64 0 0 1 537.20 370.70 Z" fill="#22808e"/><polyline points="432.8,383.5 470,383.5 533.8,375" fill="none" stroke="#8e8e8e" stroke-width="1"/><circle cx="533.8" cy="375" r="1.8" fill="#8e8e8e"/><polyline points="432.8,408.5 467,408.5 505.6,383.4" fill="none" stroke="#8e8e8e" stroke-width="1"/><circle cx="505.6" cy="383.4" r="1.8" fill="#8e8e8e"/><polyline points="597.8,440.5 641,440.5" fill="none" stroke="#8e8e8e" stroke-width="1"/><circle cx="597.8" cy="440.5" r="1.8" fill="#8e8e8e"/><polyline points="432.8,459.5 481.1,459.5" fill="none" stroke="#8e8e8e" stroke-width="1"/><circle cx="481.1" cy="459.5" r="1.8" fill="#8e8e8e"/></svg>
<div class="t" style="left:432.8px;top:195.84px;font-size:12px;color:#222222;font-weight:400;letter-spacing:-0.1px">En...</div>
<div class="t" style="left:432.8px;top:210.04px;font-size:12px;color:#a0a0a0;font-weight:400;">1.7%</div>
<div class="t" style="left:432.8px;top:221.14px;font-size:12px;color:#222222;font-weight:400;letter-spacing:-0.1px">St...</div>
<div class="t" style="left:432.8px;top:235.34px;font-size:12px;color:#a0a0a0;font-weight:400;letter-spacing:-0.2px">23....</div>
<div class="t" style="right:639.1px;top:300.34px;font-size:12px;color:#222222;font-weight:400;letter-spacing:-0.2px">Basic</div>
<div class="t" style="right:639.1px;top:314.64px;font-size:12px;color:#a0a0a0;font-weight:400;letter-spacing:-0.2px">74....</div>
<div class="t" style="left:432.8px;top:370.24px;font-size:12px;color:#222222;font-weight:400;letter-spacing:-0.4px">100+</div>
<div class="t" style="left:432.8px;top:384.94px;font-size:12px;color:#a0a0a0;font-weight:400;">1.7%</div>
<div class="t" style="left:432.8px;top:396.04px;font-size:12px;color:#222222;font-weight:400;letter-spacing:-0.1px">50-1...</div>
<div class="t" style="left:432.8px;top:410.44px;font-size:12px;color:#a0a0a0;font-weight:400;letter-spacing:-0.3px">14.0%</div>
<div class="t" style="right:639.4px;top:427.14px;font-size:12px;color:#222222;font-weight:400;letter-spacing:-0.1px">1-25...</div>
<div class="t" style="right:639.4px;top:442.04px;font-size:12px;color:#a0a0a0;font-weight:400;letter-spacing:-0.3px">52.7%</div>
<div class="t" style="left:432.8px;top:446.44px;font-size:12px;color:#222222;font-weight:400;letter-spacing:-0.1px">25-5...</div>
<div class="t" style="left:432.8px;top:460.44px;font-size:12px;color:#a0a0a0;font-weight:400;letter-spacing:-0.3px">31.5%</div>
<div class="a" style="left:40px;top:683px;width:1148px;height:37px;background:#f4f4f4;"></div>
<div class="a" style="left:40px;top:683px;width:1148px;height:1px;background:#ececec;"></div>
<svg style="left:87px;top:695px" width="9.2" height="9.2" viewBox="0 0 9.2 9.2"><path d="M3.8 0 H5.4 V3.8 H9.2 V5.4 H5.4 V9.2 H3.8 V5.4 H0 V3.8 H3.8 Z" fill="#5f6368"/></svg>
<svg style="left:115px;top:695px" width="11.6" height="10.6" viewBox="0 0 11.6 10.6"><rect x="0" y="1.2" width="11.6" height="8.4" fill="#bdbdbd"/><g fill="#5f6368"><rect x="0" y="0" width="11.6" height="1.7"/><rect x="0" y="3" width="11.6" height="1.3"/><rect x="0" y="6" width="11.6" height="1.3"/><rect x="0" y="9" width="11.6" height="1.6"/></g></svg>
<div class="a" style="left:149px;top:683px;width:114px;height:37px;background:#ffffff;"></div>
<div class="t" style="left:164px;top:694.75px;font-size:14px;color:#188038;font-weight:400;letter-spacing:0.3px;-webkit-text-stroke:0.45px #188038">customers</div>
<svg style="left:240.8px;top:699.0px" width="8" height="5" viewBox="0 0 8 5"><path d="M0 0 H8 L4 4.2 Z" fill="#188038"/></svg>
<div class="a" style="left:356.5px;top:683px;width:1px;height:37px;background:#dedede;"></div>
<div class="a" style="left:432px;top:683px;width:1px;height:37px;background:#dedede;"></div>
<div class="a" style="left:620.5px;top:683px;width:1px;height:37px;background:#dedede;"></div>
<div class="t" style="left:279.5px;top:694.75px;font-size:14px;color:#5f6368;font-weight:400;letter-spacing:0.3px;-webkit-text-stroke:0.45px #5f6368">pricing</div>
<svg style="left:333.5px;top:699.0px" width="8" height="5" viewBox="0 0 8 5"><path d="M0 0 H8 L4 4.2 Z" fill="#80868b"/></svg>
<div class="t" style="left:372.2px;top:694.75px;font-size:14px;color:#5f6368;font-weight:400;letter-spacing:0.3px;-webkit-text-stroke:0.45px #5f6368">data</div>
<svg style="left:409.7px;top:699.0px" width="8" height="5" viewBox="0 0 8 5"><path d="M0 0 H8 L4 4.2 Z" fill="#80868b"/></svg>
<div class="t" style="left:448px;top:694.75px;font-size:14px;color:#5f6368;font-weight:400;letter-spacing:0.3px;-webkit-text-stroke:0.45px #5f6368">churn/gain worksheet</div>
<svg style="left:598.2px;top:699.0px" width="8" height="5" viewBox="0 0 8 5"><path d="M0 0 H8 L4 4.2 Z" fill="#80868b"/></svg>
<svg style="left:1152px;top:692px" width="17" height="20" viewBox="0 0 17 20"><path d="M2 0 H15 Q17 0 17 2 V15 Q17 17 15 17 H10.5 L8.5 20 L6.5 17 H2 Q0 17 0 15 V2 Q0 0 2 0 Z" fill="#808080"/><path d="M8.5 3.5 Q9.3 7.7 13.5 8.5 Q9.3 9.3 8.5 13.5 Q7.7 9.3 3.5 8.5 Q7.7 7.7 8.5 3.5 Z" fill="#fff"/></svg>
<svg style="left:1206px;top:124px" width="17" height="17" viewBox="0 0 17 17"><path d="M13 0 H2 Q0 0 0 2 V13 H4 V4 H13 Z" fill="#4285f4"/>
<path d="M13 0 H15 Q17 0 17 2 V4 H13 Z" fill="#1967d2"/>
<path d="M13 4 H17 V13 H13 Z" fill="#fbbc04"/>
<path d="M0 13 H13 V17 H2 Q0 17 0 15 Z" fill="#34a853"/>
<path d="M13 13 H17 L13 17 Z" fill="#ea4335"/>
<rect x="4" y="4" width="9" height="9" fill="#fff"/>
<text x="8.5" y="11.6" font-size="7" font-family="Liberation Sans" font-weight="700" text-anchor="middle" fill="#4285f4">31</text></svg>
<svg style="left:1206px;top:176px" width="17" height="18" viewBox="0 0 17 18"><rect x="0" y="0" width="17" height="18" rx="2" fill="#fbbc04"/>
<circle cx="8.5" cy="7.5" r="3.6" fill="#fff"/><rect x="6.8" y="9" width="3.4" height="3.5" fill="#fff"/><rect x="6.8" y="13" width="3.4" height="1.2" fill="#fff"/></svg>
<svg style="left:1206px;top:229px" width="18" height="17" viewBox="0 0 18 17"><circle cx="8.2" cy="9" r="6.4" fill="none" stroke="#2684fc" stroke-width="2.6"/>
<path d="M5.2 8.6 L7.8 11.2 L16 3" fill="none" stroke="#2684fc" stroke-width="2.6"/></svg>
<svg style="left:1207px;top:281px" width="15" height="17" viewBox="0 0 15 17"><circle cx="7.5" cy="3.4" r="3.1" fill="#0b57d0"/><path d="M1 16.5 V11.5 Q1 9 3.5 9 H11.5 Q14 9 14 11.5 V16.5 Z" fill="#0b57d0"/><path d="M1 16.5 V12 Q1 10 3 9.5 V16.5Z" fill="#6e9ff3"/></svg>
<svg style="left:1209px;top:334px" width="12" height="17" viewBox="0 0 12 17"><path d="M6 0 C2.7 0 0 2.6 0 5.8 C0 10 6 16.5 6 16.5 C6 16.5 12 10 12 5.8 C12 2.6 9.3 0 6 0Z" fill="#34a853"/>
<path d="M6 0 C2.7 0 0 2.6 0 5.8 C0 7 .5 8.3 1.2 9.5 L10.8 1.8 C9.7 0.7 8 0 6 0Z" fill="#4285f4"/>
<path d="M1.3 1.8 C.5 2.8 0 4.2 0 5.8 C0 7 .5 8.3 1.2 9.5 L4.2 7Z" fill="#ea4335"/>
<path d="M1.2 9.5 C2 10.9 3 12.3 3.8 13.3 L8 8.3 L4.2 7Z" fill="#fbbc04"/>
<circle cx="6" cy="5.8" r="2" fill="#fff"/></svg>
<div class="a" style="left:1205px;top:384px;width:19px;height:1px;background:#e0e0e0;"></div>
<svg style="left:1208px;top:419.5px" width="13" height="13" viewBox="0 0 13 13"><path d="M5.6 0 H7.4 V5.6 H13 V7.4 H7.4 V13 H5.6 V7.4 H0 V5.6 H5.6 Z" fill="#1f1f1f"/></svg>
<svg style="left:1206px;top:686px" width="16" height="16" viewBox="0 0 24 24" preserveAspectRatio="none"><path d="M10 6L8.59 7.41 13.17 12l-4.58 4.59L10 18l6-6z" fill="#6f6f6f" /></svg>
</body></html>
